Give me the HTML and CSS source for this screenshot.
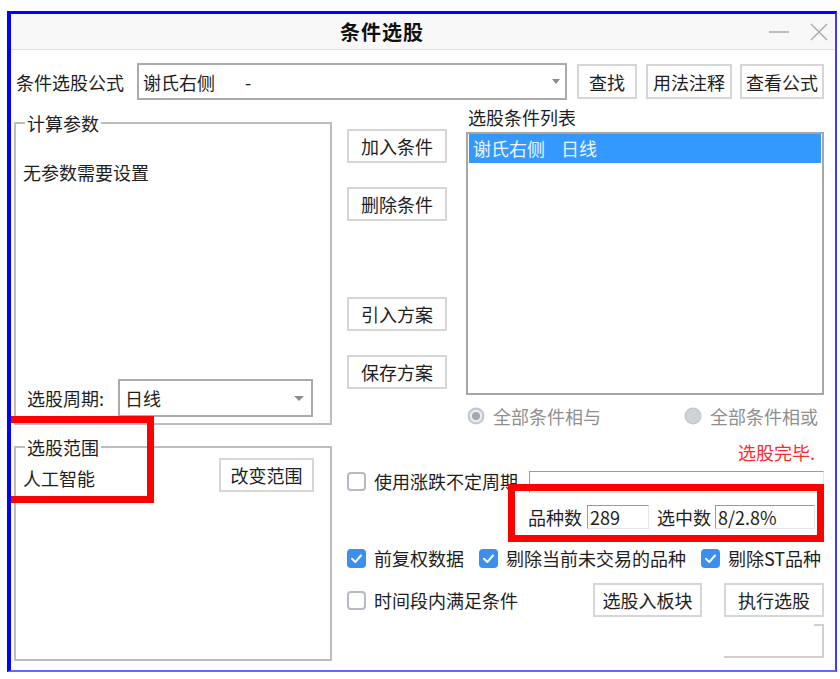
FILE: index.html
```html
<!DOCTYPE html>
<html lang="zh-CN">
<head>
<meta charset="utf-8">
<title>条件选股</title>
<link rel="stylesheet" href="styles.css">
</head>
<body>
<div class="window">
  <div class="titlebar">
    <div class="title">条件选股</div>
    <div class="controls">
      <svg class="ctl-min" width="20" height="4" viewBox="0 0 20 4"><line x1="0" y1="2" x2="20" y2="2" stroke="#a9a9a9" stroke-width="1.5"/></svg>
      <svg class="ctl-close" width="18" height="18" viewBox="0 0 18 18"><path d="M1 1 L17 17 M17 1 L1 17" stroke="#a9a9a9" stroke-width="1.4" fill="none"/></svg>
    </div>
  </div>

  <div class="content">
    <div class="formula-row">
      <span class="formula-label">条件选股公式</span>
      <div class="combo combo-formula"><span>谢氏右侧<span class="dash">-</span></span><span class="arrow"></span></div>
      <button class="btn btn-find">查找</button>
      <button class="btn btn-usage">用法注释</button>
      <button class="btn btn-view">查看公式</button>
    </div>

    <div class="main">
      <div class="left-col">
        <fieldset class="group group-params">
          <legend>计算参数</legend>
          <div class="no-params">无参数需要设置</div>
          <div class="period-row">
            <span>选股周期:</span>
            <div class="combo combo-period"><span>日线</span><span class="arrow arrow-lg"></span></div>
          </div>
        </fieldset>
        <fieldset class="group group-range">
          <legend>选股范围</legend>
          <div class="range-row">
            <span class="range-name">人工智能</span>
            <button class="btn btn-range">改变范围</button>
          </div>
        </fieldset>
      </div>

      <div class="right-col">
        <div class="top-area">
          <div class="btn-col">
            <button class="btn btn-side">加入条件</button>
            <button class="btn btn-side">删除条件</button>
            <button class="btn btn-side btn-far">引入方案</button>
            <button class="btn btn-side">保存方案</button>
          </div>
          <div class="list-col">
            <div class="list-label">选股条件列表</div>
            <div class="listbox">
              <div class="list-item selected">谢氏右侧<span class="sp">日线</span></div>
            </div>
            <div class="radio-row">
              <span class="radio">
                <svg width="18" height="18" viewBox="0 0 18 18"><circle cx="9" cy="9" r="8.5" fill="#c3c7cf"/><circle cx="9" cy="9" r="6.3" fill="#eceef1"/><circle cx="9" cy="9" r="4" fill="#a3a8b1"/></svg>
                全部条件相与
              </span>
              <span class="radio">
                <svg width="18" height="18" viewBox="0 0 18 18"><circle cx="9" cy="9" r="8.5" fill="#c3c7cf"/><circle cx="9" cy="9" r="7" fill="#cfd2d9"/></svg>
                全部条件相或
              </span>
            </div>
          </div>
        </div>

        <div class="status">选股完毕.</div>

        <div class="row row-cycle">
          <span class="cb"></span>
          <span class="cb-label">使用涨跌不定周期</span>
          <div class="field field-cycle"></div>
        </div>

        <div class="row row-count">
          <span>品种数</span>
          <div class="field field-num">289</div>
          <span class="count-label2">选中数</span>
          <div class="field field-sel">8/2.8%</div>
        </div>

        <div class="row row-checks">
          <span class="check-item"><span class="cb checked"><svg width="19" height="19" viewBox="0 0 19 19"><path d="M5 9.8 L8.3 13 L14 6.5" stroke="#fff" stroke-width="2" fill="none" stroke-linecap="round" stroke-linejoin="round"/></svg></span>前复权数据</span>
          <span class="check-item"><span class="cb checked"><svg width="19" height="19" viewBox="0 0 19 19"><path d="M5 9.8 L8.3 13 L14 6.5" stroke="#fff" stroke-width="2" fill="none" stroke-linecap="round" stroke-linejoin="round"/></svg></span>剔除当前未交易的品种</span>
          <span class="check-item"><span class="cb checked"><svg width="19" height="19" viewBox="0 0 19 19"><path d="M5 9.8 L8.3 13 L14 6.5" stroke="#fff" stroke-width="2" fill="none" stroke-linecap="round" stroke-linejoin="round"/></svg></span>剔除ST品种</span>
        </div>

        <div class="row row-actions">
          <span class="check-item"><span class="cb"></span>时间段内满足条件</span>
          <button class="btn btn-board">选股入板块</button>
          <button class="btn btn-run">执行选股</button>
        </div>

        <div class="row row-frame"><div class="frame"></div></div>
      </div>
    </div>
  </div>

  <div class="highlight hl-range"></div>
  <div class="highlight hl-count"></div>
</div>
</body>
</html>
```

FILE: styles.css
```css
* { box-sizing: border-box; }
html, body { margin: 0; padding: 0; background: #fff; }
body {
  font-family: "Noto Sans CJK SC", "Noto Sans", sans-serif;
  font-size: 18px;
  line-height: 20px;
  color: #1e1e1e;
}

.window {
  position: relative;
  margin: 11px 0 0 7px;
  width: 830px;
  height: 661px;
  border-style: solid;
  border-width: 3px 2px 2px 4px;
  border-color: #0000ff #3c3cff #6868ff #0000ff;
  background: #fff;
}

.titlebar {
  height: 36px;
  background: #f8f8f8;
  border-bottom: 1px solid #e1e1e1;
  display: flex;
  align-items: center;
  padding: 0 7px 0 329px;
}
.title { font-weight: bold; font-size: 20px; letter-spacing: 1px; color: #111; }
.controls { margin-left: auto; display: flex; align-items: center; gap: 21px; }
.controls svg { display: block; }

.content { padding: 13px 11px 0 3px; }

/* buttons */
.btn {
  font-family: inherit;
  font-size: 18px;
  line-height: 20px;
  color: #1e1e1e;
  background: #fff;
  border: 2px solid #d6d6d6;
  padding: 0;
  margin: 0;
  height: 34px;
  white-space: nowrap;
}

/* combo boxes */
.combo {
  display: flex;
  align-items: center;
  justify-content: space-between;
  border: 2px solid #ababab;
  background: #fff;
}
.arrow {
  width: 0; height: 0;
  border-left: 4px solid transparent;
  border-right: 4px solid transparent;
  border-top: 5px solid #8c8c8c;
}
.arrow-lg { border-left-width: 5px; border-right-width: 5px; border-top-width: 5px; }

/* formula row */
.formula-row { display: flex; align-items: center; height: 37px; }
.formula-label { margin-left: 2px; margin-right: 13px; }
.combo-formula { width: 430px; height: 37px; padding: 0 5px 0 4px; }
.combo-formula .dash { margin-left: 30px; }
.btn-find { width: 60px; height: 35px; margin-left: 10px; }
.btn-usage { width: 86px; height: 35px; margin-left: 9px; }
.btn-view { width: 84px; height: 35px; margin-left: 8px; }

/* main grid */
.main {
  display: grid;
  grid-template-columns: 318px 477px;
  column-gap: 15px;
  margin-top: 8px;
  align-items: start;
}

/* left column */
.left-col { padding-top: 5px; }
.group {
  margin: 0;
  min-width: 0;
  border: 2px solid #bdbdbd;
  padding: 0 7px 6px;
  display: flex;
  flex-direction: column;
}
.group legend {
  padding: 0 2px;
  margin-left: 2px;
  line-height: 20px;
}
.group-params { height: 312px; }
.no-params { margin-top: 29px; }
.period-row { margin-top: auto; display: flex; align-items: center; padding-left: 4px; }
.combo-period { width: 195px; height: 38px; margin-left: 14px; padding: 0 7px 0 5px; }

.group-range { height: 224px; margin-top: 12px; }
.range-row { display: flex; align-items: flex-start; justify-content: space-between; padding-right: 9px; }
.range-name { margin-top: 11px; }
.btn-range { width: 95px; margin-top: 1px; }

/* right column */
.right-col { display: flex; flex-direction: column; }
.top-area { display: flex; gap: 19px; }
.btn-col { width: 100px; display: flex; flex-direction: column; padding-top: 21px; }
.btn-side { width: 100px; }
.btn-side + .btn-side { margin-top: 24px; }
.btn-side.btn-far { margin-top: 76px; }

.list-col { width: 358px; display: flex; flex-direction: column; }
.list-label { line-height: 18px; padding-left: 2px; }
.listbox {
  margin-top: 6px;
  height: 263px;
  border: 2px solid #a7a7a7;
  padding: 0 1px;
}
.list-item { height: 29px; line-height: 29px; padding-left: 4px; }
.list-item.selected { background: #3399ff; color: #eef5ff; }
.list-item .sp { margin-left: 16px; }

.radio-row {
  display: flex;
  justify-content: space-between;
  margin-top: 11px;
  padding: 0 6px 0 1px;
  color: #8f8f8f;
}
.radio { display: flex; align-items: center; gap: 8px; }
.radio svg { display: block; }

.status { margin-top: 16px; text-align: right; padding-right: 9px; color: #ff2a2a; }

.row { display: flex; white-space: nowrap; }

.cb {
  width: 19px; height: 19px;
  border: 2px solid #b6bac6;
  border-radius: 4px;
  background: #fff;
  flex: none;
}
.cb.checked { background: #3a8ff0; border-color: #3a8ff0; }
.cb.checked svg { display: block; margin: -2px; }

.row-cycle { margin-top: 9px; align-items: flex-start; }
.row-cycle .cb { margin-top: 1px; }
.cb-label { margin-left: 8px; }
.field {
  border-style: solid;
  border-width: 1px;
  border-color: #9c9c9c #e6e6e6 #e6e6e6 #9c9c9c;
  background: #fff;
  height: 24px;
  line-height: 22px;
  padding-left: 2px;
}
.field-cycle { flex: 1; height: 22px; margin-left: 11px; }

.row-count { margin-top: 12px; align-items: center; padding-left: 181px; }
.field-num { width: 62px; margin-left: 5px; }
.count-label2 { margin-left: 8px; }
.field-sel { width: 100px; margin-left: 4px; }

.row-checks { margin-top: 19px; align-items: center; gap: 15px; }
.check-item { display: flex; align-items: center; gap: 8px; }

.row-actions { margin-top: 15px; align-items: center; }
.btn-board { width: 109px; margin-left: auto; }
.btn-run { width: 100px; margin-left: 22px; }

.row-frame { margin-top: 7px; justify-content: flex-end; }
.frame {
  width: 100px; height: 34px;
  border-right: 2px solid #d0d0d0;
  border-bottom: 2px solid #d0d0d0;
  background: linear-gradient(#d0d0d0, #d0d0d0) no-repeat right top / 8px 2px;
}

/* annotation overlays */
.highlight { position: absolute; border: 7px solid #ff0000; }
.hl-range { left: 0; top: 402px; width: 143px; height: 87px; border-left-width: 0; }
.hl-count { left: 497px; top: 470px; width: 316px; height: 58px; }
```
